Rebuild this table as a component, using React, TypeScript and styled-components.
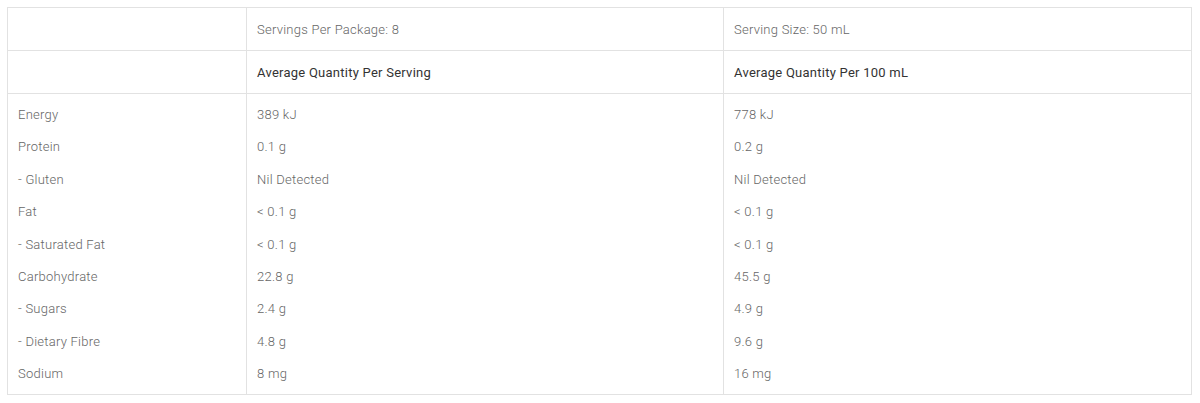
import { createGlobalStyle } from 'styled-components';
import styled from 'styled-components';

const GlobalStyle = createGlobalStyle`
  body {
    margin: 7px 8px 0 7px;
    background-color: #ffffff;
    font-family: Roboto, 'Liberation Sans', Arial, sans-serif;
  }
`;

const Table = styled.table`
  width: 100%;
  border-collapse: collapse;
  border: 1px solid #e2e2e2;
  font-size: 13px;
  font-weight: 300;
  letter-spacing: 0.25px;
  color: #666666;
`;

const HeadCell = styled.th<{ $strong?: boolean }>`
  height: 42px;
  padding: 0 10px;
  text-align: left;
  font-weight: ${(props) => (props.$strong ? 400 : 300)};
  color: ${(props) => (props.$strong ? '#333333' : '#666666')};
  border: 1px solid #e2e2e2;
`;

const BodyRow = styled.tr`
  &:first-child td {
    padding-top: 13px;
  }
  &:last-child td {
    padding-bottom: 11px;
  }
`;

const Cell = styled.td`
  padding: 8px 10px;
  line-height: 16.4px;
  border-left: 1px solid #e2e2e2;
  border-right: 1px solid #e2e2e2;
`;

interface IRow {
  name: string;
  perServing: string;
  per100: string;
}

const rows: IRow[] = [
  { name: 'Energy', perServing: '389 kJ', per100: '778 kJ' },
  { name: 'Protein', perServing: '0.1 g', per100: '0.2 g' },
  { name: '- Gluten', perServing: 'Nil Detected', per100: 'Nil Detected' },
  { name: 'Fat', perServing: '< 0.1 g', per100: '< 0.1 g' },
  { name: '- Saturated Fat', perServing: '< 0.1 g', per100: '< 0.1 g' },
  { name: 'Carbohydrate', perServing: '22.8 g', per100: '45.5 g' },
  { name: '- Sugars', perServing: '2.4 g', per100: '4.9 g' },
  { name: '- Dietary Fibre', perServing: '4.8 g', per100: '9.6 g' },
  { name: 'Sodium', perServing: '8 mg', per100: '16 mg' },
];

const App = () => {
  return (
    <>
      <GlobalStyle />
      <Table>
        <colgroup>
          <col style={{ width: 239 }} />
          <col style={{ width: 477 }} />
          <col />
        </colgroup>
        <thead>
          <tr>
            <HeadCell />
            <HeadCell>Servings Per Package: 8</HeadCell>
            <HeadCell>Serving Size: 50 mL</HeadCell>
          </tr>
          <tr>
            <HeadCell />
            <HeadCell $strong>Average Quantity Per Serving</HeadCell>
            <HeadCell $strong>Average Quantity Per 100 mL</HeadCell>
          </tr>
        </thead>
        <tbody>
          {rows.map((row) => (
            <BodyRow key={row.name}>
              <Cell>{row.name}</Cell>
              <Cell>{row.perServing}</Cell>
              <Cell>{row.per100}</Cell>
            </BodyRow>
          ))}
        </tbody>
      </Table>
    </>
  );
};

export default App;
